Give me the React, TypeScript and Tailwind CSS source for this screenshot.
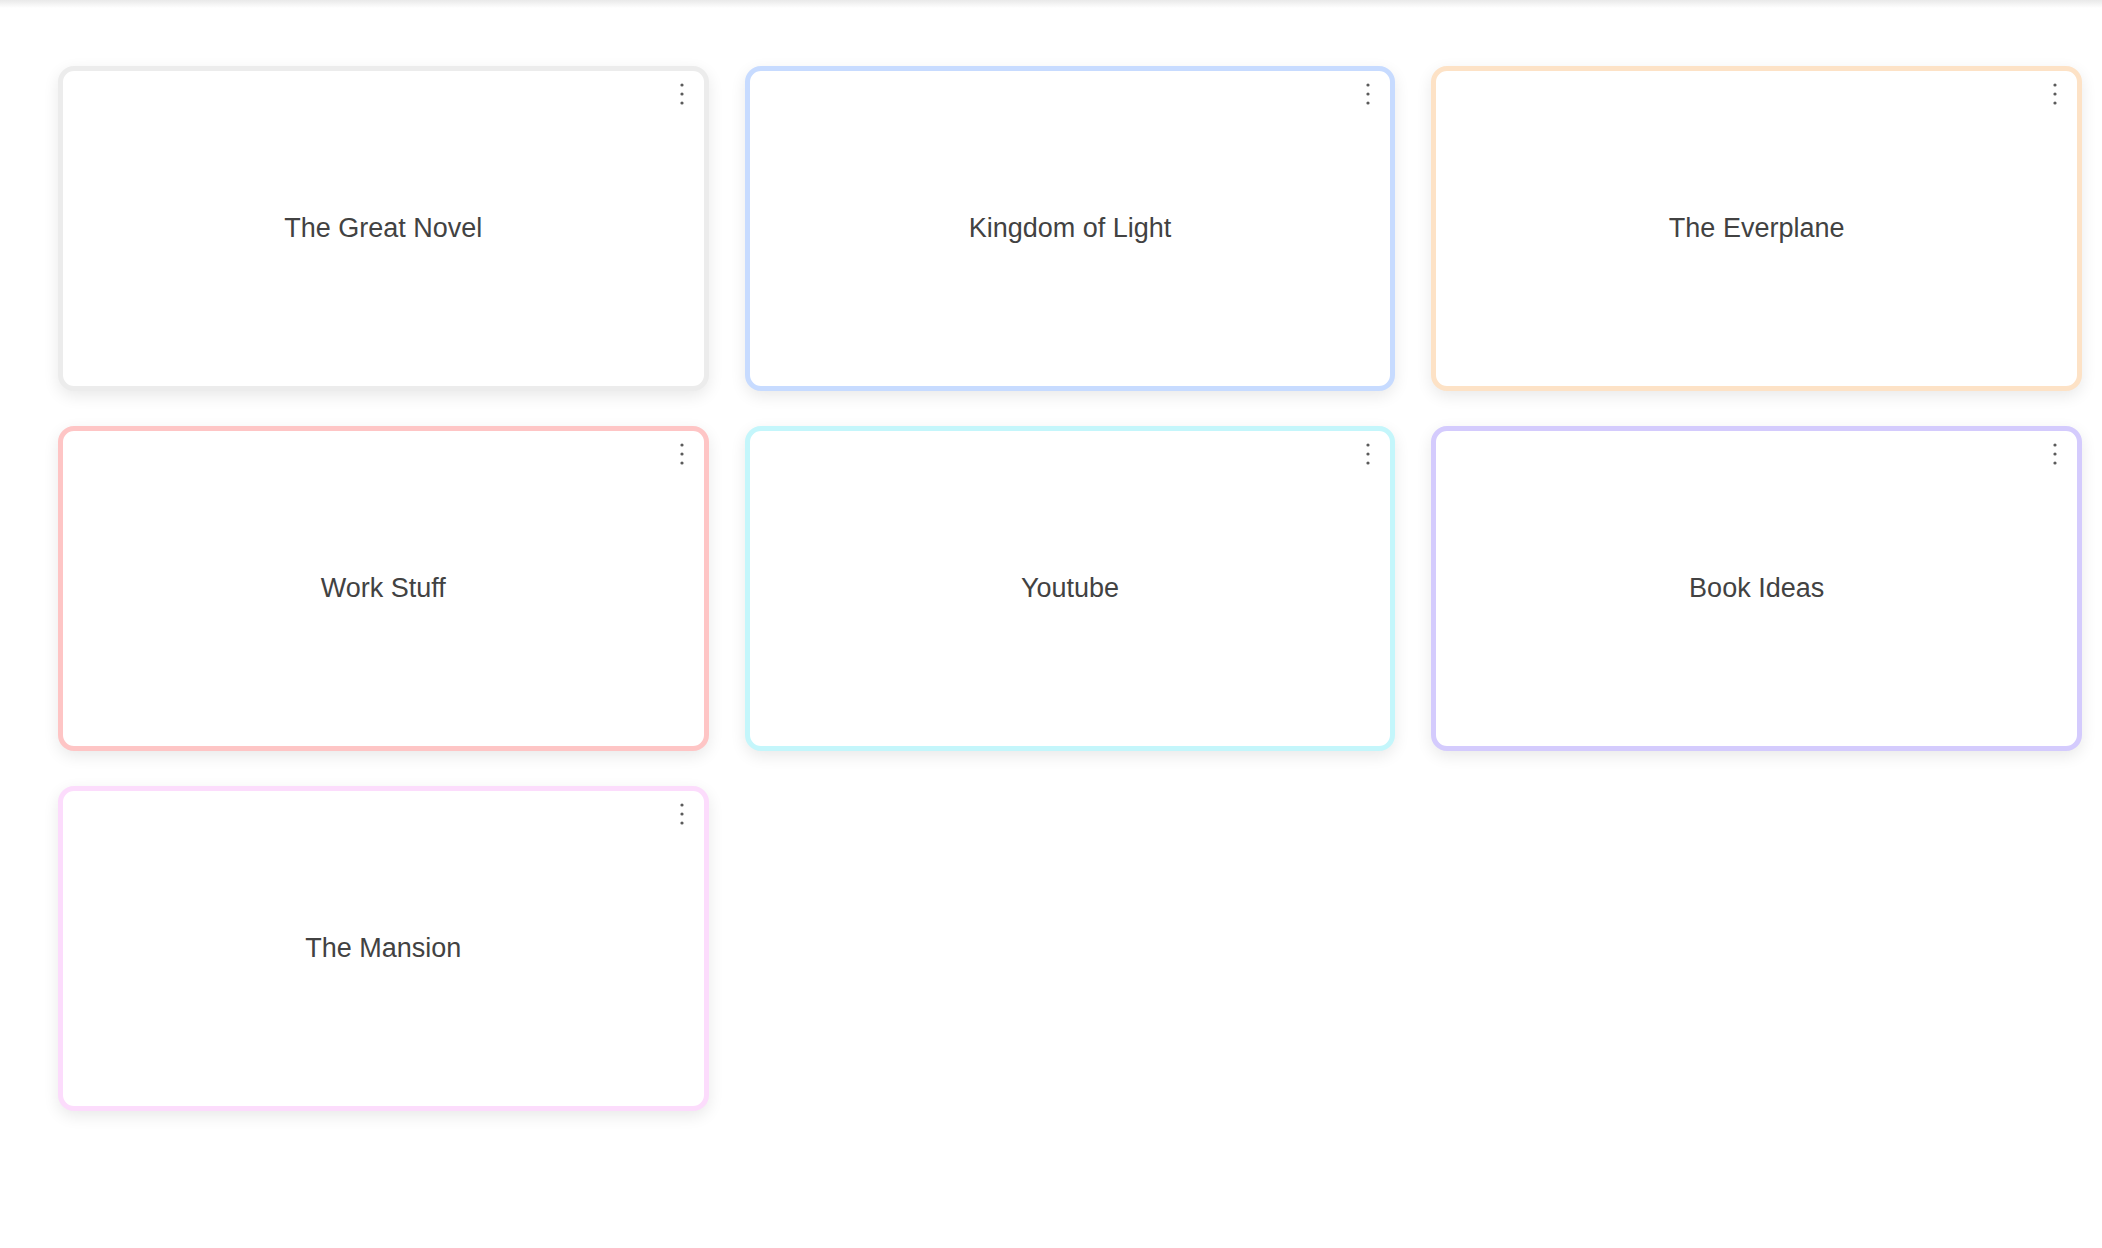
const projects = [
  { title: 'The Great Novel', border: 'border-[#ececec]' },
  { title: 'Kingdom of Light', border: 'border-[#c7dbff]' },
  { title: 'The Everplane', border: 'border-[#fde2c6]' },
  { title: 'Work Stuff', border: 'border-[#fec5c5]' },
  { title: 'Youtube', border: 'border-[#c4f6fb]' },
  { title: 'Book Ideas', border: 'border-[#d4cbfd]' },
  { title: 'The Mansion', border: 'border-[#fcdcfc]' },
]

function MoreIcon() {
  return (
    <svg width="14" height="24" viewBox="0 0 14 24" fill="#5a5a5a">
      <circle cx="7" cy="3" r="1.6" />
      <circle cx="7" cy="12" r="1.6" />
      <circle cx="7" cy="21" r="1.6" />
    </svg>
  )
}

function ProjectCard({ title, border }: { title: string; border: string }) {
  return (
    <div
      className={`relative h-[325px] rounded-2xl border-[5px] bg-white shadow-[0_5px_16px_rgba(0,0,0,0.09)] flex items-center justify-center ${border}`}
    >
      <button className="absolute top-[11px] right-[15px]">
        <MoreIcon />
      </button>
      <span className="text-[27px] text-[#424242]">{title}</span>
    </div>
  )
}

export default function App() {
  return (
    <div className="min-h-screen bg-white" style={{ fontFamily: '"Liberation Sans", Arial, sans-serif' }}>
      <div className="h-2 bg-gradient-to-b from-[#e9e9e9] to-white" />
      <div className="grid grid-cols-3 gap-x-9 gap-y-[35px] pl-[58px] pr-[20px] pt-[58px]">
        {projects.map((p) => (
          <ProjectCard key={p.title} title={p.title} border={p.border} />
        ))}
      </div>
    </div>
  )
}
